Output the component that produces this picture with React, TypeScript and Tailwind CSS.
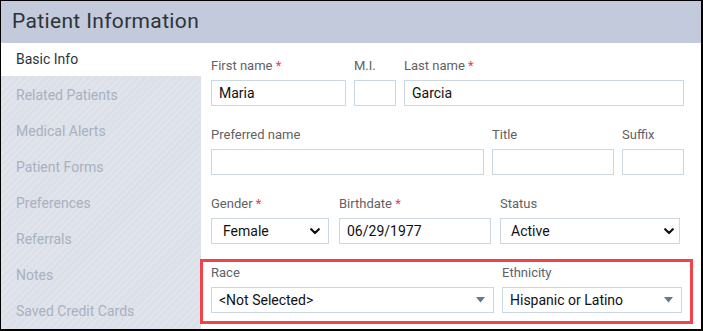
import React from "react";

const Label = ({ children, req }: { children: React.ReactNode; req?: boolean }) => (
  <div className="h-4 mb-[6px] text-[13px] leading-4 text-[#5f6266] whitespace-nowrap">
    {children}
    {req && <span className="text-[#e5404f]"> *</span>}
  </div>
);

const Input = ({ w, value, pl = "pl-[7px]" }: { w: string; value?: string; pl?: string }) => (
  <div className={`${w} h-[26px] border border-[#cbd8e2] bg-white flex items-center ${pl} text-[14px] text-[#111] leading-none`}>
    {value}
  </div>
);

const Chevron = () => (
  <svg width="10" height="7" viewBox="0 0 10 7" className="shrink-0">
    <path d="M1.2 1.2 L5 5 L8.8 1.2" fill="none" stroke="#111" strokeWidth="2.2" strokeLinecap="round" strokeLinejoin="round" />
  </svg>
);

const Caret = () => (
  <svg width="9" height="6" viewBox="0 0 9 6" className="shrink-0">
    <path d="M0 0 L9 0 L4.5 5.5 Z" fill="#5b7c93" />
  </svg>
);

const nav = [
  "Related Patients",
  "Medical Alerts",
  "Patient Forms",
  "Preferences",
  "Referrals",
  "Notes",
  "Saved Credit Cards",
];

export default function App() {
  return (
    <div
      className="w-[703px] h-[331px] overflow-hidden bg-white border-black border-l border-t border-r-2 border-b-2 flex flex-col"
      style={{ fontFamily: "Roboto, 'Liberation Sans', sans-serif" }}
    >
      <div className="h-[42px] shrink-0 bg-[#c2cadb] flex items-center pl-[11px]">
        <span className="text-[21px] text-[#2f3338] tracking-[0.35px]">Patient Information</span>
      </div>
      <div className="flex flex-1 min-h-0">
        <div className="w-[200px] shrink-0 bg-[repeating-linear-gradient(135deg,#dce0e8_0px,#dce0e8_3px,#e1e4eb_3px,#e1e4eb_5px)] flex flex-col">
          <div className="h-[35px] bg-white flex items-center pl-[15px] text-[14px] text-[#2b3440]">Basic Info</div>
          <div className="pt-[1px] flex flex-col">
            {nav.map((n) => (
              <div key={n} className="h-[36px] flex items-center pl-[15px] text-[14px] text-[#a9b1c1] shrink-0">
                {n}
              </div>
            ))}
          </div>
        </div>
        <div className="flex-1 pl-[10px] pt-[15px] flex flex-col">
          <div className="flex mb-[21px]">
            <div className="mr-[8px]">
              <Label req>First name</Label>
              <Input w="w-[135px]" value="Maria" />
            </div>
            <div className="mr-[8px]">
              <Label>M.I.</Label>
              <Input w="w-[42px]" />
            </div>
            <div>
              <Label req>Last name</Label>
              <Input w="w-[280px]" value="Garcia" />
            </div>
          </div>
          <div className="flex mb-[21px]">
            <div className="mr-[8px]">
              <Label>Preferred name</Label>
              <Input w="w-[273px]" />
            </div>
            <div className="mr-[8px]">
              <Label>Title</Label>
              <Input w="w-[122px]" />
            </div>
            <div>
              <Label>Suffix</Label>
              <Input w="w-[62px]" />
            </div>
          </div>
          <div className="flex mb-[15px]">
            <div className="mr-[10px]">
              <Label req>Gender</Label>
              <div className="w-[118px] h-[26px] border border-[#cbd8e2] flex items-center justify-between pl-[11px] pr-[8px] text-[14px] text-[#111]">
                <span>Female</span>
                <Chevron />
              </div>
            </div>
            <div className="mr-[9px]">
              <Label req>Birthdate</Label>
              <Input w="w-[152px]" value="06/29/1977" pl="pl-[7px]" />
            </div>
            <div>
              <Label>Status</Label>
              <div className="w-[180px] h-[26px] border border-[#cbd8e2] flex items-center justify-between pl-[10px] pr-[5px] text-[14px] text-[#111]">
                <span>Active</span>
                <Chevron />
              </div>
            </div>
          </div>
          <div className="ml-[-11px] w-[493px] border-[3px] border-[#f0444a] pl-[8px] pt-[3px] pb-[8px] flex">
            <div className="mr-[8px]">
              <Label>Race</Label>
              <div className="w-[283px] h-[26px] border border-[#cbd8e2] flex items-center justify-between pl-[7px] pr-[8px] text-[14px] text-[#111]">
                <span>&lt;Not Selected&gt;</span>
                <Caret />
              </div>
            </div>
            <div>
              <Label>Ethnicity</Label>
              <div className="w-[180px] h-[26px] border border-[#cbd8e2] flex items-center justify-between pl-[7px] pr-[8px] text-[14px] text-[#111]">
                <span>Hispanic or Latino</span>
                <Caret />
              </div>
            </div>
          </div>
        </div>
      </div>
    </div>
  );
}
